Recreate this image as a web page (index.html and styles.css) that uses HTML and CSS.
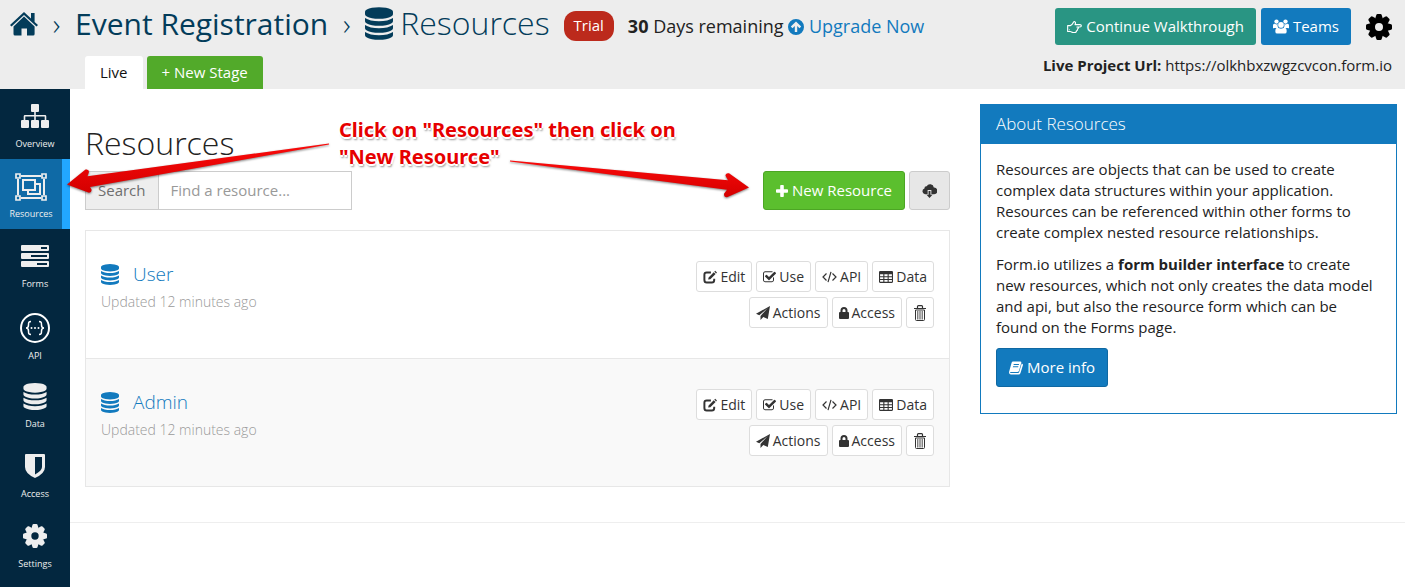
FILE: index.html
```html
<!DOCTYPE html>
<html lang="en">
<head>
<meta charset="utf-8">
<title>Event Registration - Resources</title>
<link rel="stylesheet" href="styles.css">
</head>
<body>
<svg class="sprite" aria-hidden="true">
  <symbol id="database" viewBox="128 0 1536 1792"><path d="M896 768q237 0 443-43t325-127v170q0 69-103 128t-280 93.500-385 34.500-385-34.500-280-93.500-103-128v-170q119 84 325 127t443 43zm0 768q237 0 443-43t325-127v170q0 69-103 128t-280 93.500-385 34.500-385-34.500-280-93.500-103-128v-170q119 84 325 127t443 43zm0-384q237 0 443-43t325-127v170q0 69-103 128t-280 93.500-385 34.500-385-34.500-280-93.500-103-128v-170q119 84 325 127t443 43zm0-1152q208 0 385 34.500t280 93.500 103 128v128q0 69-103 128t-280 93.500-385 34.500-385-34.500-280-93.500-103-128v-128q0-69 103-128t280-93.500 385-34.500z"/></symbol>
  <symbol id="cog" viewBox="-13 -13 26 26">
    <circle r="6.800" fill="none" stroke="currentColor" stroke-width="5.600"/>
    <g id="teeth"><path id="tooth" d="M-3.800-8.500l1.100-3.600q.3-.9 1.200-.9h3q.9 0 1.200.9l1.100 3.600z"/><use href="#tooth" transform="rotate(90)"/><use href="#tooth" transform="rotate(180)"/><use href="#tooth" transform="rotate(270)"/></g>
    <use href="#teeth" transform="rotate(45)"/>
  </symbol>
  <symbol id="home" viewBox="0 0 28 24"><path d="M14 0l7 6.600V1h3.600v8.900l3.400 3.200-1.500 1.500L14 2.900 1.500 14.600 0 13.100z"/><path d="M14 4.600l10.600 9.900V22q0 1.500-1.500 1.500H17v-7h-5.500v7H5q-1.500 0-1.500-1.500v-7.500z"/></symbol>
  <symbol id="up" viewBox="0 0 16 16"><path fill-rule="evenodd" d="M8 0a8 8 0 1 1 0 16A8 8 0 0 1 8 0zm0 2.500L2.800 7.600l1.700 1.700L6.800 7v6h2.400V7l2.300 2.300 1.700-1.700z"/></symbol>
  <symbol id="hand" viewBox="0 0 16 14"><path fill="none" stroke="currentColor" stroke-width="1.200" stroke-linejoin="round" d="M.7 5.500h2.800c1.500-.2 2.700-2 3.400-3.500.6-1.300 2.400-.8 2.200.8L8.600 4.500h5.200c2 0 2 2.500 0 2.500h-3.300 1.200c.9 1 .3 2-.7 2.100.6 1-.1 1.900-1 2 .2 1.100-.5 1.700-1.800 1.700H6.500c-1.300 0-1.900-.9-3-1H.7z"/><circle cx="2.500" cy="9.900" r=".6"/></symbol>
  <symbol id="users" viewBox="0 0 17 15"><circle cx="3.700" cy="2.300" r="2.300"/><circle cx="13.300" cy="2.300" r="2.300"/><path d="M0 9V6.500Q0 4 2 4.600q2 1.200 3 .2-.8 2.300.7 4.200H1.500Q0 9.500 0 9zM17 9V6.500Q17 4 15 4.600q-2 1.200-3 .2.800 2.300-.7 4.200h4.200q1.500.5 1.500 0z"/><circle cx="8.500" cy="5.800" r="3"/><path d="M2.500 13v-1q0-3.200 2.500-3.200 1 0 1.500.5 2 1 4 0 .5-.5 1.500-.5 2.500 0 2.500 3.200v1q0 2-2 2h-8q-2 0-2-2z"/></symbol>
  <symbol id="sitemap" viewBox="0 0 28 24"><path d="M11 0h6q1 0 1 1v6q0 1-1 1h-2.200v3H24q1.300 0 1.300 1.300V16H27q1 0 1 1v6q0 1-1 1h-6q-1 0-1-1v-6q0-1 1-1h2.700v-3.400h-8.900V16H17q1 0 1 1v6q0 1-1 1h-6q-1 0-1-1v-6q0-1 1-1h2.200v-3.400H4.300V16H7q1 0 1 1v6q0 1-1 1H1q-1 0-1-1v-6q0-1 1-1h1.700v-3.700Q2.700 11 4 11h9.200V8H11q-1 0-1-1V1q0-1 1-1z"/></symbol>
  <symbol id="group" viewBox="0 0 32 28"><g fill="none" stroke="currentColor" stroke-width="2"><path d="M6 3h20M6 25h20M3 6v16M29 6v16"/><path stroke-width="1.700" d="M1 1h4v4H1zM27 1h4v4h-4zM1 23h4v4H1zM27 23h4v4h-4z"/><path d="M8 7h12v10H8zM20 11h5v10H13v-4"/></g></symbol>
  <symbol id="server" viewBox="0 0 28 22"><path fill-rule="evenodd" d="M1 0h26q1 0 1 1v4q0 1-1 1H1Q0 6 0 5V1q0-1 1-1zm19 2v2h6V2zM1 8h26q1 0 1 1v4q0 1-1 1H1q-1 0-1-1V9q0-1 1-1zm9 2v2h16v-2zM1 16h26q1 0 1 1v4q0 1-1 1H1q-1 0-1-1v-4q0-1 1-1zm15 2v2h10v-2z"/></symbol>
  <symbol id="api" viewBox="0 0 30 30"><g fill="none" stroke="currentColor"><circle cx="15" cy="15" r="14" stroke-width="2"/><path stroke-width="1.500" d="M11 8.500c-2.500 0-2.500 1-2.500 3.500 0 2-.5 3-2.500 3 2 0 2.500 1 2.500 3 0 2.500 0 3.500 2.500 3.500M19 8.500c2.500 0 2.500 1 2.500 3.500 0 2 .5 3 2.500 3-2 0-2.500 1-2.500 3 0 2.500 0 3.500-2.500 3.500"/></g><circle cx="11.500" cy="15" r="1"/><circle cx="15" cy="15" r="1"/><circle cx="18.500" cy="15" r="1"/></symbol>
  <symbol id="shield" viewBox="0 0 20 24"><path fill-rule="evenodd" d="M1 0h18q1 0 1 1v12q0 6.500-10 11Q0 19.500 0 13V1q0-1 1-1zm9 3v17.500q7-4 7-7.500V3z"/></symbol>
  <symbol id="plus" viewBox="0 0 12 12"><path d="M5 0h2q.8 0 .8.800v3.400h3.400q.8 0 .8.800v2q0 .8-.8.800H7.800v3.400q0 .8-.8.800H5q-.8 0-.8-.8V7.800H.8Q0 7.800 0 7V5q0-.8.8-.8h3.400V.8Q4.200 0 5 0z"/></symbol>
  <symbol id="cloud" viewBox="0 0 16 15"><path d="M6 11H3.200a3.200 3.200 0 0 1-.6-6.200A2.200 2.200 0 0 1 5 2.500a4 4 0 0 1 7.600 1.300 3.600 3.600 0 0 1 .4 7.200h-3V6.500H6z"/><path d="M7 7.500h2v4h2.200L8 15l-3.200-3.500H7z"/></symbol>
  <symbol id="edit" viewBox="0 0 15 14"><path fill="none" stroke="currentColor" stroke-width="2.100" d="M8.500 2.100H4Q1.500 2.100 1.500 4.500v5.700Q1.500 12.900 4 12.900h5.500q2.500 0 2.500-2.700V9"/><path d="M6 7.500l5.500-5.700 2 2-5.600 5.500-2.400.5zM12.100 1.200l1-1 1.900 2-1 1z"/></symbol>
  <symbol id="check" viewBox="64 128 1664 1472"><path d="M1472 930v318q0 119-84.500 203.500t-203.500 84.500h-832q-119 0-203.500-84.500t-84.500-203.500v-832q0-119 84.500-203.500t203.500-84.500h832q63 0 117 25 15 7 18 23 3 17-9 29l-49 49q-10 10-23 10-3 0-9-2-23-6-45-6h-832q-66 0-113 47t-47 113v832q0 66 47 113t113 47h832q66 0 113-47t47-113v-254q0-13 9-22l64-64q10-10 23-10 6 0 12 3 20 8 20 29zm231-489l-814 814q-24 24-57 24t-57-24l-430-430q-24-24-24-57t24-57l110-110q24-24 57-24t57 24l263 263 647-647q24-24 57-24t57 24l110 110q24 24 24 57t-24 57z"/></symbol>
  <symbol id="code" viewBox="0 0 15 12"><path fill="none" stroke="currentColor" stroke-width="1.200" d="M4.500 2.500L1 6l3.500 3.500M10.500 2.500L14 6l-3.500 3.500M9 .8L6 11.200"/></symbol>
  <symbol id="table" viewBox="0 0 13 11"><path fill-rule="evenodd" d="M1 0h11q1 0 1 1v9q0 1-1 1H1q-1 0-1-1V1q0-1 1-1zm0 3v1.700h3V3zm4 0v1.700h3V3zm4 0v1.700h3V3zM1 5.700v1.600h3V5.700zm4 0v1.600h3V5.700zm4 0v1.600h3V5.700zM1 8.300V10h3V8.300zm4 0V10h3V8.300zm4 0V10h3V8.300z"/></symbol>
  <symbol id="send" viewBox="0 0 14 14"><path d="M14 0l-2.200 13-4.500-2.100L4.500 14V9.900L11.800 2 3.300 9.200 0 7.800z"/></symbol>
  <symbol id="lock" viewBox="0 0 10 12"><path fill-rule="evenodd" d="M1.500 5V3.500a3.500 3.500 0 0 1 7 0V5H9q1 0 1 1v5q0 1-1 1H1q-1 0-1-1V6q0-1 1-1zm2 0h3V3.500a1.500 1.500 0 0 0-3 0z"/></symbol>
  <symbol id="trash" viewBox="0 0 14 16"><g fill="none" stroke="currentColor"><path d="M1 3.500h12M4.500 3V1.500q0-.9.900-.9h3.200q.9 0 .9.900V3" stroke-width="1.200"/><path d="M2.500 5v9.500q0 1 1 1h7q1 0 1-1V5z"/><path d="M4.800 6v8.500M7 6v8.500M9.200 6v8.500" stroke-width=".9"/></g></symbol>
  <symbol id="book" viewBox="0 0 14 13"><path fill-rule="evenodd" d="M4 0h7.300q1.300 0 1 1.300L10 9.200q-.4 1.200-1.800 1.200H1.700q-.7 0-.6.500.1.600 1 .6h7q.7 0 1-.7L12.700 2q1.600.5 1.200 1.800l-2.400 7.700Q11 13 9.500 13H2Q-.3 13 .1 10.300L2.600 1.300Q3 0 4 0zm.8 2.600l-.3 1h5.300l.3-1zm-.7 2.200l-.3 1h5.300l.3-1z"/></symbol>
</svg>

<header class="topbar">
  <div class="topbar-left">
    <nav class="crumbs" aria-label="Breadcrumb">
      <a href="#home" aria-label="Home"><svg class="i-home"><use href="#home"/></svg></a>
      <span class="sep">›</span>
      <a href="#project">Event Registration</a>
      <span class="sep">›</span>
      <a href="#resources" class="crumb-current"><svg class="i-db-lg"><use href="#database"/></svg>Resources</a>
      <span class="badge">Trial</span>
      <span class="trial"><b>30</b> Days remaining <a href="#upgrade"><svg class="i-up"><use href="#up"/></svg> Upgrade Now</a></span>
    </nav>
    <div class="stages"><a class="stage" href="#live">Live</a><a class="stage stage-new" href="#new-stage">+ New Stage</a></div>
  </div>
  <div class="topbar-right">
    <div class="actions">
      <button class="btn btn-teal"><svg class="i-15"><use href="#hand"/></svg> Continue Walkthrough</button>
      <button class="btn btn-flat"><svg class="i-16"><use href="#users"/></svg> Teams</button>
      <button class="cog" aria-label="Settings"><svg class="i-cog"><use href="#cog"/></svg></button>
    </div>
    <div class="url"><b>Live Project Url:</b> https://olkhbxzwgzcvcon.form.io</div>
  </div>
</header>

<div class="shell">
  <nav class="sidebar" aria-label="Project">
    <a href="#overview"><svg class="nav-i"><use href="#sitemap"/></svg>Overview</a>
    <a href="#resources" class="active"><svg class="nav-i wide"><use href="#group"/></svg>Resources</a>
    <a href="#forms"><svg class="nav-i"><use href="#server"/></svg>Forms</a>
    <a href="#api"><svg class="nav-i round"><use href="#api"/></svg>API</a>
    <a href="#data"><svg class="nav-i db"><use href="#database"/></svg>Data</a>
    <a href="#access"><svg class="nav-i"><use href="#shield"/></svg>Access</a>
    <a href="#settings"><svg class="nav-i"><use href="#cog"/></svg>Settings</a>
  </nav>

  <div class="page">
    <div class="columns">
      <main>
        <h1>Resources</h1>
        <div class="toolbar">
          <div class="search"><label for="q">Search</label><input id="q" type="text" placeholder="Find a resource..."></div>
          <div class="tools">
            <button class="btn btn-green"><svg class="i-12"><use href="#plus"/></svg> New Resource</button>
            <button class="btn btn-grey" aria-label="Import"><svg class="i-15"><use href="#cloud"/></svg></button>
          </div>
        </div>
        <ul class="list">
          <li>
            <div>
              <h2><a href="#user"><svg class="i-db"><use href="#database"/></svg>User</a></h2>
              <p>Updated 12 minutes ago</p>
            </div>
            <div class="ops">
              <div><button><svg class="i-14"><use href="#edit"/></svg> Edit</button><button><svg class="i-13"><use href="#check"/></svg> Use</button><button><svg class="i-15"><use href="#code"/></svg> API</button><button><svg class="i-14"><use href="#table"/></svg> Data</button></div>
              <div><button><svg class="i-14"><use href="#send"/></svg> Actions</button><button><svg class="i-10"><use href="#lock"/></svg> Access</button><button aria-label="Delete"><svg class="i-trash"><use href="#trash"/></svg></button></div>
            </div>
          </li>
          <li>
            <div>
              <h2><a href="#admin"><svg class="i-db"><use href="#database"/></svg>Admin</a></h2>
              <p>Updated 12 minutes ago</p>
            </div>
            <div class="ops">
              <div><button><svg class="i-14"><use href="#edit"/></svg> Edit</button><button><svg class="i-13"><use href="#check"/></svg> Use</button><button><svg class="i-15"><use href="#code"/></svg> API</button><button><svg class="i-14"><use href="#table"/></svg> Data</button></div>
              <div><button><svg class="i-14"><use href="#send"/></svg> Actions</button><button><svg class="i-10"><use href="#lock"/></svg> Access</button><button aria-label="Delete"><svg class="i-trash"><use href="#trash"/></svg></button></div>
            </div>
          </li>
        </ul>
      </main>
      <aside class="panel">
        <h3>About Resources</h3>
        <div class="panel-body">
          <p>Resources are objects that can be used to create complex data structures within your application. Resources can be referenced within other forms to create complex nested resource relationships.</p>
          <p>Form.io utilizes a <b>form builder interface</b> to create new resources, which not only creates the data model and api, but also the resource form which can be found on the Forms page.</p>
          <a class="btn btn-blue" href="#more"><svg class="i-14"><use href="#book"/></svg> More info</a>
        </div>
      </aside>
    </div>
    <hr>
  </div>
</div>

<svg class="arrows" width="700" height="60" viewBox="60 140 700 60" aria-hidden="true">
  <defs><linearGradient id="red" x1="0" y1="0" x2="0" y2="1"><stop offset="0" stop-color="#fb0a0a"/><stop offset="1" stop-color="#d40000"/></linearGradient></defs>
  <g fill="url(#red)">
    <path d="M329 143.500v1L90 187l1.500 2.500q.5 3-2.500 3.200L67 184.600l18.500-15q3.500-.8 3.500 2.400l-1.500 4.200z"/>
    <path d="M510 160.500v1L727 189.700l-3 4q-.2 3.500 3 3.600l22-9.800-20-14.300q-3.500-.5-3.500 2.500l2.500 4.500z"/>
  </g>
</svg>
<p class="callout">Click on "Resources" then click on "New Resource"</p>
</body>
</html>
```
FILE: styles.css
```css
* { box-sizing: border-box; }
body { margin: 0; min-height: 100vh; display: flex; flex-direction: column; position: relative; font: 15px/21px "Open Sans", "Noto Sans", sans-serif; color: #222; background: #fff; }
a { color: #127abe; text-decoration: none; }
svg { fill: currentColor; flex: none; }
h1, h2, h3, p, ul { margin: 0; padding: 0; }
button { font: inherit; cursor: pointer; }
.sprite { position: absolute; width: 0; height: 0; }

.i-home { width: 28px; height: 24px; display: block; }
.i-db-lg { width: 28px; height: 33px; }
.i-up { width: 16px; height: 16px; vertical-align: -2px; }
.i-cog { width: 26px; height: 26px; display: block; }
.i-10 { width: 10px; height: 12px; }
.i-12 { width: 12px; height: 12px; }
.i-13 { width: 13px; height: 12px; }
.i-14 { width: 14px; height: 14px; }
.i-15 { width: 15px; height: 14px; }
.i-16 { width: 16px; height: 15px; }
.i-trash { width: 14px; height: 16px; }
.i-db { width: 18px; height: 21px; }

.topbar { display: flex; justify-content: space-between; height: 89px; background: #ededed; }
.topbar-left { display: flex; flex-direction: column; justify-content: space-between; }
.crumbs { display: flex; align-items: center; height: 48px; padding-left: 10px; font-size: 30px; line-height: 40px; }
.crumbs > a { color: #033c5a; }
.sep { width: 37px; text-align: center; color: #033c5a; font-weight: 300; }
.crumb-current { display: flex; align-items: center; gap: 7px; padding-bottom: 2px; font-size: 32px; font-weight: 300; }
.badge { margin: 4px 0 0 14px; padding: 4px 10px 5px; border-radius: 12px; background: #bc2a1c; color: #fff; font-size: 15px; line-height: 21px; }
.trial { margin: 4px 0 0 14px; font-size: 18px; line-height: 26px; }
.stages { display: flex; gap: 4px; padding-left: 85px; }
.stage { padding: 6px 15px; border-radius: 3px 3px 0 0; background: #fff; color: #111; }
.stage-new { background: #52aa2a; color: #fff; }
.topbar-right { display: flex; flex-direction: column; align-items: flex-end; gap: 10px; padding: 8px 13px 0 0; }
.actions { display: flex; align-items: center; gap: 5px; }
.cog { margin-left: 10px; padding: 0; border: 0; background: none; color: #000; }

.btn { display: inline-flex; align-items: center; gap: 4px; padding: 8px 12px; border: 1px solid; border-radius: 3px; font-size: 15px; line-height: 21px; color: #fff; white-space: nowrap; }
.btn-teal { border: 0; background: #299583; }
.btn-flat { border: 0; background: #127abe; }
.btn-blue { background: #127abe; border-color: #0f68a2; }
.btn-green { background: #5bbf2e; border-color: #4ca624; }
.btn-grey { background: #e7e7e7; border-color: #ccc; color: #333; }

.shell { display: flex; flex: 1; }
.sidebar { width: 70px; background: #03273f; }
.sidebar a { display: flex; flex-direction: column; align-items: center; height: 70px; padding-top: 14px; color: #eee; font-size: 9px; line-height: 26px; }
.sidebar .active { background: #0f6aa6; border-right: 8px solid #22a7ff; }
.nav-i { width: 28px; height: 28px; padding: 1px 0 3px; }
.nav-i.wide { width: 32px; padding: 0; }
.nav-i.round { width: 30px; height: 30px; padding: 0; color: #fff; }
.nav-i.db { padding: 0 0 1px; }

.page { flex: 1; min-width: 0; }
.columns { display: grid; grid-template-columns: 865fr 417fr; align-items: start; gap: 30px; padding: 15px 8px 0 15px; }
h1 { padding: 17px 0 6px; font-size: 32px; line-height: 44px; font-weight: 300; }
.toolbar { display: flex; justify-content: space-between; margin-bottom: 20px; }
.search { display: flex; height: 39px; border: 1px solid #ccc; }
.search label { padding: 8px 12px; background: #eee; border-right: 1px solid #ccc; color: #6f6f6f; }
.search input { width: 192px; padding: 0 12px; border: 0; font: inherit; background: #fff; }
.search input::placeholder { color: #999; opacity: 1; }
.tools { display: flex; gap: 4px; }
.list { list-style: none; border: 1px solid #e7e7e7; }
.list li { display: flex; justify-content: space-between; padding: 30px 15px; }
.list li + li { background: #f9f9f9; border-top: 1px solid #e7e7e7; }
h2 { font-size: 19px; line-height: 26px; font-weight: 300; }
h2 a { display: flex; align-items: center; gap: 14px; }
.list p { margin-top: 4px; font-size: 14px; font-weight: 300; color: #999; }
.ops { display: flex; flex-direction: column; gap: 5px; }
.ops div { display: flex; justify-content: flex-end; gap: 4px; }
.ops button { display: flex; align-items: center; gap: 3px; padding: 4px 6px; border: 1px solid #ddd; border-radius: 3px; background: #fff; color: #333; font-size: 14px; line-height: 21px; }
.panel { border: 1px solid #127abe; }
.panel h3 { padding: 8px 15px 10px; background: #127abe; color: #fff; font-size: 17px; line-height: 21px; font-weight: 300; }
.panel-body { padding: 15px 15px 26px; }
.panel p + p { margin: 11px 0 10px; }
hr { margin: 35px 0 0; border: 0; border-top: 1px solid #eee; }

.arrows { position: absolute; left: 60px; top: 140px; pointer-events: none; filter: drop-shadow(0 1px 1px rgba(0, 0, 0, .5)); }
.callout { position: absolute; left: 339px; top: 116px; width: 360px; color: #e60000; font-family: "Noto Sans", sans-serif; font-size: 20px; line-height: 27px; font-weight: 700; text-shadow: -1px -1px #fff, 1px -1px #fff, -2px 0 #fff, 2px 0 #fff, 0 2px #fff, 1px 3px 2px #999; }
```
